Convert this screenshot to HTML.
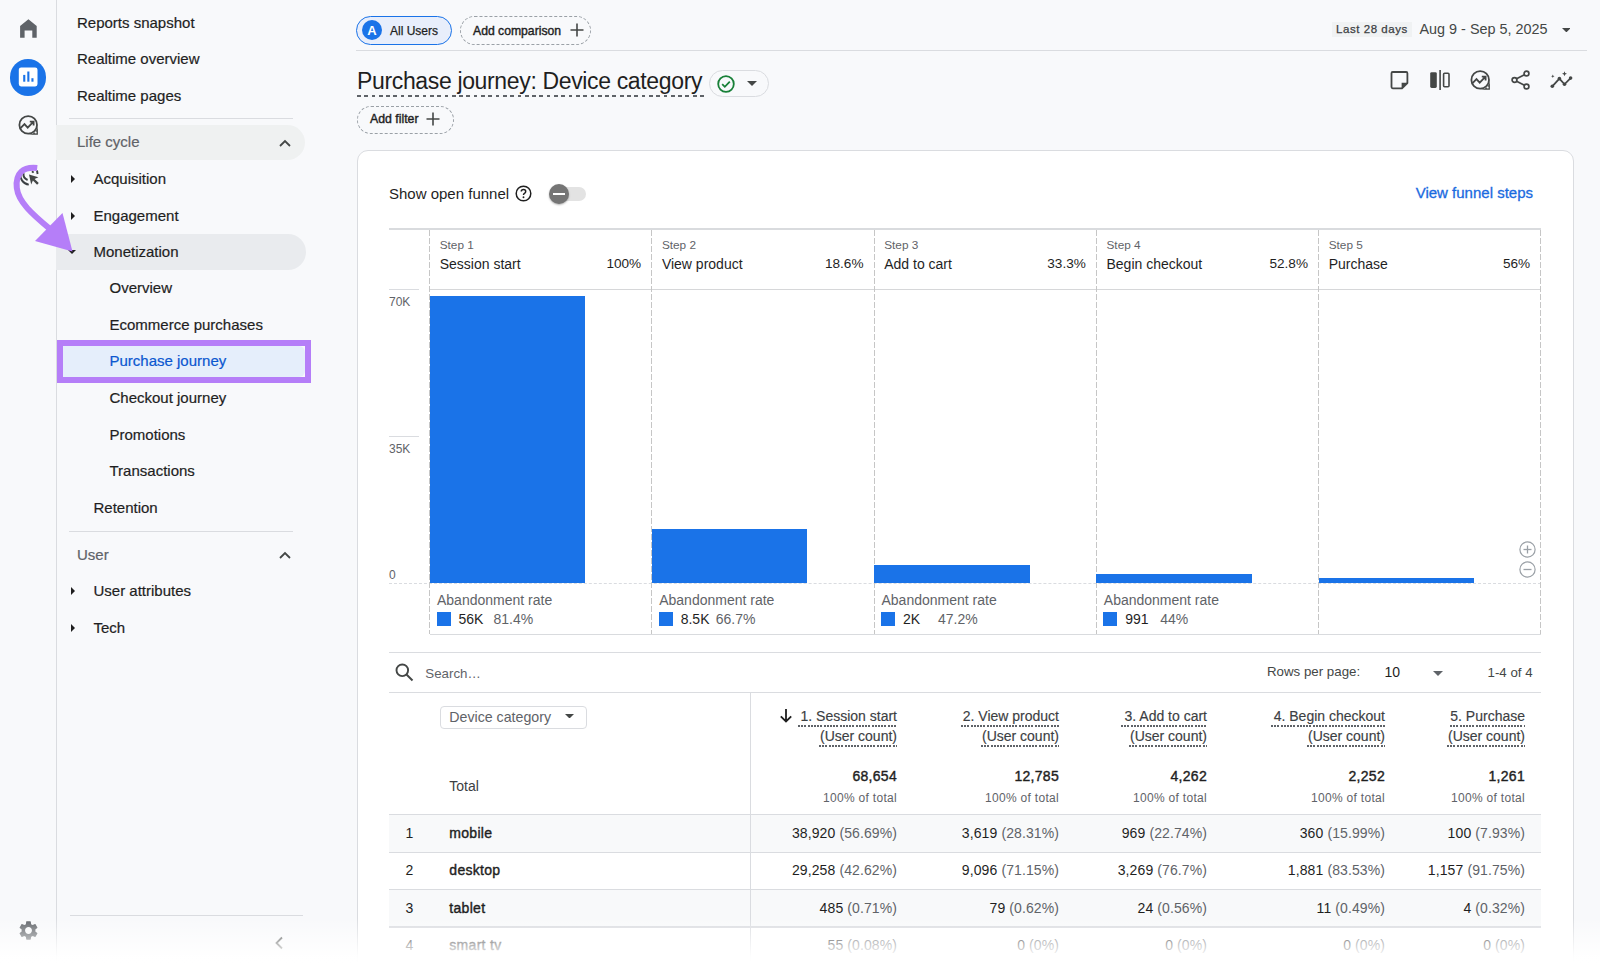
<!DOCTYPE html>
<html><head><meta charset="utf-8"><style>
html,body{margin:0;padding:0;width:1600px;height:963px;overflow:hidden;background:#f8f9fb;font-family:"Liberation Sans",sans-serif;}
div{white-space:nowrap;}
</style></head><body>
<div style="position:absolute;left:56px;top:0px;width:1px;height:963px;background:#dadce0;"></div>
<svg style="position:absolute;left:0;top:0" width="50" height="50" viewBox="0 0 50 50"><path d="M28.4 19.3 L36.7 26 V37.8 H32.3 V30.4 H24.6 V37.8 H20.1 V26 Z" fill="#5f6368"/></svg>
<div style="position:absolute;left:9.7px;top:59.3px;width:36.4px;height:36.4px;border-radius:50%;background:#1a73e8"></div>
<svg style="position:absolute;left:0;top:50px" width="50" height="50" viewBox="0 50 50 50"><rect x="18.8" y="67.5" width="18.7" height="18.9" rx="2.3" fill="#fff"/><rect x="23.2" y="74.9" width="2.1" height="6.8" fill="#1a73e8"/><rect x="27.3" y="71.5" width="2.1" height="10.2" fill="#1a73e8"/><rect x="31.4" y="78.2" width="2.1" height="3.5" fill="#1a73e8"/></svg>
<svg style="position:absolute;left:18px;top:115px" width="21" height="21" viewBox="0 0 21 21"><circle cx="10.2" cy="9.9" r="8.8" fill="none" stroke="#444746" stroke-width="1.8"/><path d="M19.9 9.9 V19.8 H10.2 A9.7 9.7 0 0 0 19.9 9.9 Z" fill="#444746"/><rect x="16.8" y="16.6" width="1.8" height="1.8" fill="#f8f9fb"/><path d="M2.3 13.4 L6.5 9.1 L9.7 12.6 L15 7.2 M11.8 6.6 H15.6 V10.4" fill="none" stroke="#444746" stroke-width="1.8"/></svg>
<svg style="position:absolute;left:0;top:150px" width="50" height="50" viewBox="0 150 50 50"><path d="M20.6 173 A9.6 9.6 0 0 0 28.8 184.6" fill="none" stroke="#3c4043" stroke-width="1.9"/><path d="M23.6 173.2 A6.2 6.2 0 0 0 27.6 180" fill="none" stroke="#3c4043" stroke-width="1.9"/><path d="M32 171.2 L33.6 172.6 M37 170.5 L37.6 174" stroke="#3c4043" stroke-width="1.9"/><path d="M29 174.6 L38.4 177.2 L34.6 178.9 L38.8 183.1 L37.1 184.8 L32.9 180.6 L31.2 184.4 Z" fill="#444746"/></svg>
<svg style="position:absolute;left:16.5px;top:919px" width="23" height="23" viewBox="0 0 24 24"><path fill="#5f6368" d="M19.14 12.94c.04-.3.06-.61.06-.94 0-.32-.02-.64-.07-.94l2.03-1.58a.49.49 0 0 0 .12-.61l-1.92-3.32a.488.488 0 0 0-.59-.22l-2.39.96c-.5-.38-1.03-.7-1.62-.94l-.36-2.54a.484.484 0 0 0-.48-.41h-3.84c-.24 0-.43.17-.47.41l-.36 2.54c-.59.24-1.13.57-1.62.94l-2.39-.96c-.22-.08-.47 0-.59.22L2.74 8.87c-.12.21-.08.47.12.61l2.03 1.58c-.05.3-.09.63-.09.94s.02.64.07.94l-2.03 1.58a.49.49 0 0 0-.12.61l1.92 3.32c.12.22.37.29.59.22l2.39-.96c.5.38 1.03.7 1.62.94l.36 2.54c.05.24.24.41.48.41h3.84c.24 0 .44-.17.47-.41l.36-2.54c.59-.24 1.13-.56 1.62-.94l2.39.96c.22.08.47 0 .59-.22l1.92-3.32c.12-.22.07-.47-.12-.61l-2.01-1.58zM12 15.6c-1.98 0-3.6-1.62-3.6-3.6s1.62-3.6 3.6-3.6 3.6 1.62 3.6 3.6-1.62 3.6-3.6 3.6z"/></svg>
<div style="position:absolute;left:77px;top:13.70px;font-size:15px;line-height:17px;color:#1f1f1f;-webkit-text-stroke:0.2px #1f1f1f;">Reports snapshot</div>
<div style="position:absolute;left:77px;top:50.30px;font-size:15px;line-height:17px;color:#1f1f1f;-webkit-text-stroke:0.2px #1f1f1f;">Realtime overview</div>
<div style="position:absolute;left:77px;top:86.80px;font-size:15px;line-height:17px;color:#1f1f1f;-webkit-text-stroke:0.2px #1f1f1f;">Realtime pages</div>
<div style="position:absolute;left:69px;top:118px;width:224px;height:1px;background:#dadce0;"></div>
<div style="position:absolute;left:56px;top:124.5px;width:249px;height:35.5px;background:#eff1f1;border-radius:0 18px 18px 0"></div>
<div style="position:absolute;left:77px;top:133.30px;font-size:15px;line-height:17px;color:#5f6368;-webkit-text-stroke:0.2px #5f6368;">Life cycle</div>
<svg style="position:absolute;left:278px;top:138px" width="14" height="10" viewBox="0 0 14 10"><path d="M2 8 L7 3 L12 8" fill="none" stroke="#444746" stroke-width="1.8"/></svg>
<svg style="position:absolute;left:69.5px;top:174px" width="6" height="10" viewBox="0 0 6 10"><path d="M1 1 L5 5 L1 9 Z" fill="#1f1f1f"/></svg>
<div style="position:absolute;left:93.5px;top:170.30px;font-size:15px;line-height:17px;color:#1f1f1f;-webkit-text-stroke:0.2px #1f1f1f;">Acquisition</div>
<svg style="position:absolute;left:69.5px;top:210.5px" width="6" height="10" viewBox="0 0 6 10"><path d="M1 1 L5 5 L1 9 Z" fill="#1f1f1f"/></svg>
<div style="position:absolute;left:93.5px;top:206.80px;font-size:15px;line-height:17px;color:#1f1f1f;-webkit-text-stroke:0.2px #1f1f1f;">Engagement</div>
<div style="position:absolute;left:56px;top:234px;width:250px;height:36px;background:#e9ebee;border-radius:0 18px 18px 0"></div>
<svg style="position:absolute;left:67px;top:249px" width="10" height="6" viewBox="0 0 10 6"><path d="M1 1 L5 5 L9 1 Z" fill="#1f1f1f"/></svg>
<div style="position:absolute;left:93.5px;top:243.30px;font-size:15px;line-height:17px;color:#1f1f1f;-webkit-text-stroke:0.2px #1f1f1f;">Monetization</div>
<div style="position:absolute;left:109.5px;top:279.30px;font-size:15px;line-height:17px;color:#1f1f1f;-webkit-text-stroke:0.2px #1f1f1f;">Overview</div>
<div style="position:absolute;left:109.5px;top:315.80px;font-size:15px;line-height:17px;color:#1f1f1f;-webkit-text-stroke:0.2px #1f1f1f;">Ecommerce purchases</div>
<div style="position:absolute;left:57px;top:340px;width:254px;height:43px;box-sizing:border-box;border:6px solid #b57ef8;"></div>
<div style="position:absolute;left:63px;top:346px;width:242px;height:31px;background:#e5eefb;border-radius:0 6px 6px 0"></div>
<div style="position:absolute;left:109.5px;top:352.30px;font-size:15px;line-height:17px;color:#0b57d0;-webkit-text-stroke:0.2px #0b57d0;">Purchase journey</div>
<div style="position:absolute;left:109.5px;top:389.30px;font-size:15px;line-height:17px;color:#1f1f1f;-webkit-text-stroke:0.2px #1f1f1f;">Checkout journey</div>
<div style="position:absolute;left:109.5px;top:425.80px;font-size:15px;line-height:17px;color:#1f1f1f;-webkit-text-stroke:0.2px #1f1f1f;">Promotions</div>
<div style="position:absolute;left:109.5px;top:462.30px;font-size:15px;line-height:17px;color:#1f1f1f;-webkit-text-stroke:0.2px #1f1f1f;">Transactions</div>
<div style="position:absolute;left:93.5px;top:498.80px;font-size:15px;line-height:17px;color:#1f1f1f;-webkit-text-stroke:0.2px #1f1f1f;">Retention</div>
<div style="position:absolute;left:69px;top:530.5px;width:224px;height:1px;background:#dadce0;"></div>
<div style="position:absolute;left:77px;top:545.80px;font-size:15px;line-height:17px;color:#5f6368;-webkit-text-stroke:0.2px #5f6368;">User</div>
<svg style="position:absolute;left:278px;top:550px" width="14" height="10" viewBox="0 0 14 10"><path d="M2 8 L7 3 L12 8" fill="none" stroke="#444746" stroke-width="1.8"/></svg>
<svg style="position:absolute;left:69.5px;top:586px" width="6" height="10" viewBox="0 0 6 10"><path d="M1 1 L5 5 L1 9 Z" fill="#1f1f1f"/></svg>
<div style="position:absolute;left:93.5px;top:582.30px;font-size:15px;line-height:17px;color:#1f1f1f;-webkit-text-stroke:0.2px #1f1f1f;">User attributes</div>
<svg style="position:absolute;left:69.5px;top:622.5px" width="6" height="10" viewBox="0 0 6 10"><path d="M1 1 L5 5 L1 9 Z" fill="#1f1f1f"/></svg>
<div style="position:absolute;left:93.5px;top:618.80px;font-size:15px;line-height:17px;color:#1f1f1f;-webkit-text-stroke:0.2px #1f1f1f;">Tech</div>
<div style="position:absolute;left:70px;top:915px;width:233px;height:1px;background:#dadce0;"></div>
<svg style="position:absolute;left:274px;top:936px" width="10" height="14" viewBox="0 0 10 14"><path d="M8 1.5 L2.5 7 L8 12.5" fill="none" stroke="#444746" stroke-width="1.8"/></svg>
<svg style="position:absolute;left:0;top:150px" width="100" height="120" viewBox="0 150 100 120"><path d="M37.2 168 C 23 166.5, 15.2 173, 16.8 188 C 18.5 202, 32 214, 50 229" fill="none" stroke="#b57ef8" stroke-width="6" stroke-linecap="butt"/><path d="M62.5 213 L35 241 L72.5 251.5 Z" fill="#b57ef8"/></svg>
<div style="position:absolute;left:356px;top:16px;width:96px;height:28.5px;box-sizing:border-box;border:1.5px solid #1a73e8;border-radius:15px;background:#e8eefb"></div>
<div style="position:absolute;left:362px;top:20px;width:20px;height:20px;border-radius:50%;background:#1a73e8"></div>
<div style="position:absolute;left:372px;transform:translateX(-50%);top:23.00px;font-size:13px;line-height:15px;color:#fff;font-weight:700;">A</div>
<div style="position:absolute;left:390px;top:23.54px;font-size:12px;line-height:14px;color:#1f1f1f;-webkit-text-stroke:0.25px #1f1f1f;">All Users</div>
<div style="position:absolute;left:460px;top:16px;width:131px;height:28.5px;box-sizing:border-box;border:1px dashed #9aa0a6;border-radius:15px"></div>
<div style="position:absolute;left:473px;top:23.97px;font-size:12.2px;line-height:14px;color:#1f1f1f;-webkit-text-stroke:0.4px #1f1f1f;">Add comparison</div>
<svg style="position:absolute;left:569.5px;top:23.0px" width="14" height="14" viewBox="0 0 14 14"><path d="M7 0.5 V13.5 M0.5 7 H13.5" stroke="#444746" stroke-width="1.6" fill="none"/></svg>
<div style="position:absolute;left:356px;top:50px;width:1231px;height:1px;background:#dadce0;"></div>
<div style="position:absolute;left:1332px;top:22px;width:80px;height:15px;background:#f0f2f3"></div>
<div style="position:absolute;left:1336px;top:23.02px;font-size:11.5px;line-height:13px;color:#3c4043;letter-spacing:0.55px;-webkit-text-stroke:0.25px #3c4043;">Last 28 days</div>
<div style="position:absolute;left:1419.5px;top:20.81px;font-size:14.4px;line-height:17px;color:#444746;">Aug 9 - Sep 5, 2025</div>
<svg style="position:absolute;left:1561.6px;top:27.8px" width="8.8" height="4.4" viewBox="0 0 10 5"><path d="M0 0 L10 0 L5 5 Z" fill="#444746"/></svg>
<div style="position:absolute;left:357px;top:68.33px;font-size:23px;line-height:26px;color:#1f1f1f;letter-spacing:-0.35px;">Purchase journey: Device category</div>
<div style="position:absolute;left:357px;top:95px;width:347px;height:2px;background:repeating-linear-gradient(90deg,#5f6368 0 3.7px,transparent 3.7px 7.3px)"></div>
<div style="position:absolute;left:709px;top:69.5px;width:60px;height:27.5px;box-sizing:border-box;border:1px solid #dadce0;border-radius:14px"></div>
<svg style="position:absolute;left:717px;top:75px" width="18" height="18" viewBox="0 0 18 18"><circle cx="9" cy="9" r="7.8" fill="none" stroke="#188038" stroke-width="1.8"/><path d="M5.2 9.2 L7.8 11.8 L12.8 6.6" fill="none" stroke="#188038" stroke-width="1.8"/></svg>
<svg style="position:absolute;left:747px;top:80.5px" width="10" height="5" viewBox="0 0 10 5"><path d="M0 0 L10 0 L5 5 Z" fill="#444746"/></svg>
<div style="position:absolute;left:357px;top:106px;width:97px;height:27.5px;box-sizing:border-box;border:1px dashed #9aa0a6;border-radius:14px"></div>
<div style="position:absolute;left:370px;top:112.24px;font-size:12.3px;line-height:14px;color:#1f1f1f;-webkit-text-stroke:0.4px #1f1f1f;">Add filter</div>
<svg style="position:absolute;left:426.3px;top:111.6px" width="14" height="14" viewBox="0 0 14 14"><path d="M7 0.5 V13.5 M0.5 7 H13.5" stroke="#444746" stroke-width="1.6" fill="none"/></svg>
<svg style="position:absolute;left:1389px;top:70px" width="20" height="20" viewBox="0 0 20 20"><path d="M2.5 3.2 Q2.5 2 3.7 2 H17.2 Q18.4 2 18.4 3.2 V13 L13 18.3 H3.7 Q2.5 18.3 2.5 17.1 Z" fill="none" stroke="#444746" stroke-width="1.8" stroke-linejoin="round"/><path d="M12.6 18.3 V12.8 H18.4 Z" fill="#444746"/></svg>
<svg style="position:absolute;left:1430px;top:70px" width="21" height="21" viewBox="0 0 21 21"><rect x="0.2" y="2.2" width="6.6" height="15.8" rx="1.4" fill="#444746"/><rect x="9.3" y="0" width="1.6" height="20" fill="#444746"/><rect x="13.6" y="3.3" width="5.4" height="13.5" rx="1" fill="none" stroke="#444746" stroke-width="1.6"/></svg>
<svg style="position:absolute;left:1470px;top:70px" width="21" height="21" viewBox="0 0 21 21"><circle cx="10.2" cy="9.9" r="8.8" fill="none" stroke="#444746" stroke-width="1.8"/><path d="M19.9 9.9 V19.8 H10.2 A9.7 9.7 0 0 0 19.9 9.9 Z" fill="#444746"/><rect x="16.8" y="16.6" width="1.8" height="1.8" fill="#f8f9fb"/><path d="M2.3 13.4 L6.5 9.1 L9.7 12.6 L15 7.2 M11.8 6.6 H15.6 V10.4" fill="none" stroke="#444746" stroke-width="1.8"/></svg>
<svg style="position:absolute;left:1511px;top:70px" width="21" height="21" viewBox="0 0 21 21"><circle cx="15.5" cy="3.5" r="2.4" fill="none" stroke="#444746" stroke-width="1.7"/><circle cx="3.5" cy="10" r="2.4" fill="none" stroke="#444746" stroke-width="1.7"/><circle cx="15.5" cy="16.5" r="2.4" fill="none" stroke="#444746" stroke-width="1.7"/><path d="M5.6 8.8 L13.4 4.7 M5.6 11.2 L13.4 15.3" stroke="#444746" stroke-width="1.7"/></svg>
<svg style="position:absolute;left:1546px;top:66px" width="30" height="28" viewBox="1546 66 30 28"><path d="M1552.3 86.3 L1559.4 78.6 L1564.5 84.3 L1570.6 78.1" fill="none" stroke="#444746" stroke-width="1.8"/><circle cx="1552.3" cy="86.3" r="1.8" fill="#444746"/><circle cx="1559.4" cy="78.6" r="1.8" fill="#444746"/><circle cx="1564.5" cy="84.3" r="1.8" fill="#444746"/><circle cx="1570.6" cy="78.1" r="1.8" fill="#444746"/><path d="M1564.5 71.3 L1565.2 73.1 L1567 73.8 L1565.2 74.5 L1564.5 76.3 L1563.8 74.5 L1562 73.8 L1563.8 73.1 Z" fill="#444746"/><path d="M1552.8 74.6 L1553.3 75.8 L1554.5 76.3 L1553.3 76.8 L1552.8 78 L1552.3 76.8 L1551.1 76.3 L1552.3 75.8 Z" fill="#444746"/></svg>
<div style="position:absolute;left:356.5px;top:150px;width:1217px;height:900px;box-sizing:border-box;border:1px solid #dadce0;border-radius:11px;background:#fff"></div>
<div style="position:absolute;left:389px;top:185.30px;font-size:15px;line-height:17px;color:#1f1f1f;">Show open funnel</div>
<svg style="position:absolute;left:515px;top:185px" width="17" height="17" viewBox="0 0 17 17"><circle cx="8.5" cy="8.5" r="7.3" fill="none" stroke="#1f1f1f" stroke-width="1.5"/><path d="M6.3 6.6 Q6.3 4.5 8.5 4.5 Q10.7 4.5 10.7 6.4 Q10.7 7.6 9.4 8.3 Q8.5 8.8 8.5 10" fill="none" stroke="#1f1f1f" stroke-width="1.5"/><circle cx="8.5" cy="12.3" r="0.95" fill="#1f1f1f"/></svg>
<div style="position:absolute;left:552px;top:187px;width:34px;height:14px;border-radius:7px;background:#e3e3e3"></div>
<div style="position:absolute;left:549px;top:184px;width:20px;height:20px;border-radius:50%;background:#757575;box-shadow:0 1px 2px rgba(0,0,0,.3)"></div>
<div style="position:absolute;left:553px;top:193px;width:12px;height:2px;background:#fff;"></div>
<div style="position:absolute;right:67px;top:183.90px;font-size:15px;line-height:17px;color:#1a6ae0;-webkit-text-stroke:0.3px #1a6ae0;">View funnel steps</div>
<div style="position:absolute;left:389px;top:228px;width:1152px;height:1.5px;background:#d9dbde;"></div>
<div style="position:absolute;left:429.5px;top:288.8px;width:1111px;height:1.5px;background:#d6d7d9;"></div>
<div style="position:absolute;left:389px;top:289px;width:30px;height:1.3px;background:#dadce0;"></div>
<div style="position:absolute;left:389px;top:436px;width:30px;height:1px;background:#dadce0;"></div>
<div style="position:absolute;left:389px;top:582.5px;width:1152px;height:0;border-top:1px dashed #dadce0"></div>
<div style="position:absolute;left:429.5px;top:634px;width:1111px;height:1.3px;background:#d9dbde;"></div>
<div style="position:absolute;left:429px;top:229px;width:1px;height:405px;background:repeating-linear-gradient(180deg,transparent 0 1px,#c6c6c6 1px 7px,transparent 7px 8px)"></div>
<div style="position:absolute;left:651px;top:229px;width:1px;height:405px;background:repeating-linear-gradient(180deg,transparent 0 1px,#c6c6c6 1px 7px,transparent 7px 8px)"></div>
<div style="position:absolute;left:874px;top:229px;width:1px;height:405px;background:repeating-linear-gradient(180deg,transparent 0 1px,#c6c6c6 1px 7px,transparent 7px 8px)"></div>
<div style="position:absolute;left:1096px;top:229px;width:1px;height:405px;background:repeating-linear-gradient(180deg,transparent 0 1px,#c6c6c6 1px 7px,transparent 7px 8px)"></div>
<div style="position:absolute;left:1318px;top:229px;width:1px;height:405px;background:repeating-linear-gradient(180deg,transparent 0 1px,#c6c6c6 1px 7px,transparent 7px 8px)"></div>
<div style="position:absolute;left:1540px;top:229px;width:1px;height:405px;background:repeating-linear-gradient(180deg,transparent 0 1px,#c6c6c6 1px 7px,transparent 7px 8px)"></div>
<div style="position:absolute;left:389px;top:294.84px;font-size:12px;line-height:14px;color:#5f6368;">70K</div>
<div style="position:absolute;left:389px;top:441.64px;font-size:12px;line-height:14px;color:#5f6368;">35K</div>
<div style="position:absolute;left:389px;top:568.24px;font-size:12px;line-height:14px;color:#5f6368;">0</div>
<div style="position:absolute;left:439.7px;top:237.91px;font-size:11.8px;line-height:14px;color:#5f6368;">Step 1</div>
<div style="position:absolute;left:439.7px;top:256.15px;font-size:14px;line-height:16px;color:#1f1f1f;">Session start</div>
<div style="position:absolute;right:958.8px;top:256.29px;font-size:13.6px;line-height:16px;color:#1f1f1f;">100%</div>
<div style="position:absolute;left:429.5px;top:295.63397142857144px;width:155.5px;height:287.36602857142856px;background:#1a73e8;"></div>
<div style="position:absolute;left:437.0px;top:591.95px;font-size:14px;line-height:16px;color:#5f6368;">Abandonment rate</div>
<div style="position:absolute;left:436.5px;top:612px;width:14px;height:14px;background:#1a73e8;"></div>
<div style="position:absolute;left:458.5px;top:611.15px;font-size:14px;line-height:16px;color:#1f1f1f;">56K</div>
<div style="position:absolute;left:493.5px;top:611.15px;font-size:14px;line-height:16px;color:#5f6368;">81.4%</div>
<div style="position:absolute;left:661.9000000000001px;top:237.91px;font-size:11.8px;line-height:14px;color:#5f6368;">Step 2</div>
<div style="position:absolute;left:661.9000000000001px;top:256.15px;font-size:14px;line-height:16px;color:#1f1f1f;">View product</div>
<div style="position:absolute;right:736.5px;top:256.29px;font-size:13.6px;line-height:16px;color:#1f1f1f;">18.6%</div>
<div style="position:absolute;left:651.7px;top:529.4856428571428px;width:155.5px;height:53.51435714285714px;background:#1a73e8;"></div>
<div style="position:absolute;left:659.2px;top:591.95px;font-size:14px;line-height:16px;color:#5f6368;">Abandonment rate</div>
<div style="position:absolute;left:658.7px;top:612px;width:14px;height:14px;background:#1a73e8;"></div>
<div style="position:absolute;left:680.7px;top:611.15px;font-size:14px;line-height:16px;color:#1f1f1f;">8.5K</div>
<div style="position:absolute;left:715.7px;top:611.15px;font-size:14px;line-height:16px;color:#5f6368;">66.7%</div>
<div style="position:absolute;left:884.2px;top:237.91px;font-size:11.8px;line-height:14px;color:#5f6368;">Step 3</div>
<div style="position:absolute;left:884.2px;top:256.15px;font-size:14px;line-height:16px;color:#1f1f1f;">Add to cart</div>
<div style="position:absolute;right:514.2px;top:256.29px;font-size:13.6px;line-height:16px;color:#1f1f1f;">33.3%</div>
<div style="position:absolute;left:874px;top:565.1604857142858px;width:155.5px;height:17.839514285714287px;background:#1a73e8;"></div>
<div style="position:absolute;left:881.5px;top:591.95px;font-size:14px;line-height:16px;color:#5f6368;">Abandonment rate</div>
<div style="position:absolute;left:881px;top:612px;width:14px;height:14px;background:#1a73e8;"></div>
<div style="position:absolute;left:903px;top:611.15px;font-size:14px;line-height:16px;color:#1f1f1f;">2K</div>
<div style="position:absolute;left:938px;top:611.15px;font-size:14px;line-height:16px;color:#5f6368;">47.2%</div>
<div style="position:absolute;left:1106.5px;top:237.91px;font-size:11.8px;line-height:14px;color:#5f6368;">Step 4</div>
<div style="position:absolute;left:1106.5px;top:256.15px;font-size:14px;line-height:16px;color:#1f1f1f;">Begin checkout</div>
<div style="position:absolute;right:292.0px;top:256.29px;font-size:13.6px;line-height:16px;color:#1f1f1f;">52.8%</div>
<div style="position:absolute;left:1096.3px;top:573.5737714285714px;width:155.5px;height:9.426228571428572px;background:#1a73e8;"></div>
<div style="position:absolute;left:1103.8px;top:591.95px;font-size:14px;line-height:16px;color:#5f6368;">Abandonment rate</div>
<div style="position:absolute;left:1103.3px;top:612px;width:14px;height:14px;background:#1a73e8;"></div>
<div style="position:absolute;left:1125.3px;top:611.15px;font-size:14px;line-height:16px;color:#1f1f1f;">991</div>
<div style="position:absolute;left:1160.3px;top:611.15px;font-size:14px;line-height:16px;color:#5f6368;">44%</div>
<div style="position:absolute;left:1328.7px;top:237.91px;font-size:11.8px;line-height:14px;color:#5f6368;">Step 5</div>
<div style="position:absolute;left:1328.7px;top:256.15px;font-size:14px;line-height:16px;color:#1f1f1f;">Purchase</div>
<div style="position:absolute;right:69.79999999999995px;top:256.29px;font-size:13.6px;line-height:16px;color:#1f1f1f;">56%</div>
<div style="position:absolute;left:1318.5px;top:577.7218142857142px;width:155.5px;height:5.278185714285715px;background:#1a73e8;"></div>
<svg style="position:absolute;left:1518.5px;top:540.5px" width="17" height="17" viewBox="0 0 17 17"><circle cx="8.5" cy="8.5" r="7.6" fill="none" stroke="#9aa0a6" stroke-width="1.2"/><path d="M4.5 8.5 H12.5" stroke="#9aa0a6" stroke-width="1.3"/><path d="M8.5 4.5 V12.5" stroke="#9aa0a6" stroke-width="1.3"/></svg>
<svg style="position:absolute;left:1518.5px;top:560.5px" width="17" height="17" viewBox="0 0 17 17"><circle cx="8.5" cy="8.5" r="7.6" fill="none" stroke="#9aa0a6" stroke-width="1.2"/><path d="M4.5 8.5 H12.5" stroke="#9aa0a6" stroke-width="1.3"/></svg>
<div style="position:absolute;left:389px;top:651.5px;width:1152px;height:1.5px;background:#dadce0;"></div>
<svg style="position:absolute;left:395px;top:663px" width="19" height="19" viewBox="0 0 19 19"><circle cx="7.3" cy="7.3" r="5.8" fill="none" stroke="#444746" stroke-width="1.9"/><path d="M11.5 11.5 L17.5 17.5" stroke="#444746" stroke-width="2"/></svg>
<div style="position:absolute;left:425.3px;top:665.69px;font-size:13.3px;line-height:15px;color:#5f6368;">Search…</div>
<div style="position:absolute;left:1267px;top:664.49px;font-size:13.3px;line-height:15px;color:#444746;">Rows per page:</div>
<div style="position:absolute;left:1384.5px;top:664.15px;font-size:14px;line-height:16px;color:#1f1f1f;">10</div>
<svg style="position:absolute;left:1433px;top:670.5px" width="10" height="5" viewBox="0 0 10 5"><path d="M0 0 L10 0 L5 5 Z" fill="#5f6368"/></svg>
<div style="position:absolute;right:67.40000000000009px;top:664.89px;font-size:13.3px;line-height:15px;color:#444746;">1-4 of 4</div>
<div style="position:absolute;left:389px;top:691.5px;width:1152px;height:1.3px;background:#dadce0;"></div>
<div style="position:absolute;left:750px;top:692px;width:1px;height:300px;background:#dadce0;"></div>
<div style="position:absolute;left:440px;top:705.5px;width:147px;height:23.5px;box-sizing:border-box;border:1px solid #dadce0;border-radius:4px"></div>
<div style="position:absolute;left:449.3px;top:709.08px;font-size:14.2px;line-height:16px;color:#5f6368;">Device category</div>
<svg style="position:absolute;left:565.0px;top:713.75px" width="9.0" height="4.5" viewBox="0 0 10 5"><path d="M0 0 L10 0 L5 5 Z" fill="#444746"/></svg>
<svg style="position:absolute;left:779px;top:708px" width="14" height="15" viewBox="0 0 14 15"><path d="M7 1 V13.5 M1.8 8.3 L7 13.5 L12.2 8.3" fill="none" stroke="#1f1f1f" stroke-width="1.8"/></svg>
<div style="position:absolute;right:703px;top:707.65px;font-size:14px;line-height:16px;color:#3c4043;-webkit-text-stroke:0.15px #3c4043;">1. Session start</div>
<div style="position:absolute;right:703px;top:727.95px;font-size:14px;line-height:16px;color:#3c4043;-webkit-text-stroke:0.15px #3c4043;">(User count)</div>
<div style="position:absolute;left:798px;top:725px;width:99px;height:1.5px;background:repeating-linear-gradient(90deg,#5f6368 0 2px,transparent 2px 3.2px);"></div>
<div style="position:absolute;left:818.5px;top:745px;width:78.5px;height:1.5px;background:repeating-linear-gradient(90deg,#5f6368 0 2px,transparent 2px 3.2px);"></div>
<div style="position:absolute;right:703px;top:768.15px;font-size:14px;line-height:16px;color:#1f1f1f;letter-spacing:0.3px;-webkit-text-stroke:0.4px #1f1f1f;">68,654</div>
<div style="position:absolute;right:703px;top:791.14px;font-size:12px;line-height:14px;color:#5f6368;letter-spacing:0.3px;">100% of total</div>
<div style="position:absolute;right:541px;top:707.65px;font-size:14px;line-height:16px;color:#3c4043;-webkit-text-stroke:0.15px #3c4043;">2. View product</div>
<div style="position:absolute;right:541px;top:727.95px;font-size:14px;line-height:16px;color:#3c4043;-webkit-text-stroke:0.15px #3c4043;">(User count)</div>
<div style="position:absolute;left:961px;top:725px;width:98px;height:1.5px;background:repeating-linear-gradient(90deg,#5f6368 0 2px,transparent 2px 3.2px);"></div>
<div style="position:absolute;left:980.5px;top:745px;width:78.5px;height:1.5px;background:repeating-linear-gradient(90deg,#5f6368 0 2px,transparent 2px 3.2px);"></div>
<div style="position:absolute;right:541px;top:768.15px;font-size:14px;line-height:16px;color:#1f1f1f;letter-spacing:0.3px;-webkit-text-stroke:0.4px #1f1f1f;">12,785</div>
<div style="position:absolute;right:541px;top:791.14px;font-size:12px;line-height:14px;color:#5f6368;letter-spacing:0.3px;">100% of total</div>
<div style="position:absolute;right:393px;top:707.65px;font-size:14px;line-height:16px;color:#3c4043;-webkit-text-stroke:0.15px #3c4043;">3. Add to cart</div>
<div style="position:absolute;right:393px;top:727.95px;font-size:14px;line-height:16px;color:#3c4043;-webkit-text-stroke:0.15px #3c4043;">(User count)</div>
<div style="position:absolute;left:1121px;top:725px;width:86px;height:1.5px;background:repeating-linear-gradient(90deg,#5f6368 0 2px,transparent 2px 3.2px);"></div>
<div style="position:absolute;left:1128.5px;top:745px;width:78.5px;height:1.5px;background:repeating-linear-gradient(90deg,#5f6368 0 2px,transparent 2px 3.2px);"></div>
<div style="position:absolute;right:393px;top:768.15px;font-size:14px;line-height:16px;color:#1f1f1f;letter-spacing:0.3px;-webkit-text-stroke:0.4px #1f1f1f;">4,262</div>
<div style="position:absolute;right:393px;top:791.14px;font-size:12px;line-height:14px;color:#5f6368;letter-spacing:0.3px;">100% of total</div>
<div style="position:absolute;right:215px;top:707.65px;font-size:14px;line-height:16px;color:#3c4043;-webkit-text-stroke:0.15px #3c4043;">4. Begin checkout</div>
<div style="position:absolute;right:215px;top:727.95px;font-size:14px;line-height:16px;color:#3c4043;-webkit-text-stroke:0.15px #3c4043;">(User count)</div>
<div style="position:absolute;left:1271px;top:725px;width:114px;height:1.5px;background:repeating-linear-gradient(90deg,#5f6368 0 2px,transparent 2px 3.2px);"></div>
<div style="position:absolute;left:1306.5px;top:745px;width:78.5px;height:1.5px;background:repeating-linear-gradient(90deg,#5f6368 0 2px,transparent 2px 3.2px);"></div>
<div style="position:absolute;right:215px;top:768.15px;font-size:14px;line-height:16px;color:#1f1f1f;letter-spacing:0.3px;-webkit-text-stroke:0.4px #1f1f1f;">2,252</div>
<div style="position:absolute;right:215px;top:791.14px;font-size:12px;line-height:14px;color:#5f6368;letter-spacing:0.3px;">100% of total</div>
<div style="position:absolute;right:75px;top:707.65px;font-size:14px;line-height:16px;color:#3c4043;-webkit-text-stroke:0.15px #3c4043;">5. Purchase</div>
<div style="position:absolute;right:75px;top:727.95px;font-size:14px;line-height:16px;color:#3c4043;-webkit-text-stroke:0.15px #3c4043;">(User count)</div>
<div style="position:absolute;left:1450px;top:725px;width:75px;height:1.5px;background:repeating-linear-gradient(90deg,#5f6368 0 2px,transparent 2px 3.2px);"></div>
<div style="position:absolute;left:1446.5px;top:745px;width:78.5px;height:1.5px;background:repeating-linear-gradient(90deg,#5f6368 0 2px,transparent 2px 3.2px);"></div>
<div style="position:absolute;right:75px;top:768.15px;font-size:14px;line-height:16px;color:#1f1f1f;letter-spacing:0.3px;-webkit-text-stroke:0.4px #1f1f1f;">1,261</div>
<div style="position:absolute;right:75px;top:791.14px;font-size:12px;line-height:14px;color:#5f6368;letter-spacing:0.3px;">100% of total</div>
<div style="position:absolute;left:449.3px;top:777.95px;font-size:14px;line-height:16px;color:#3c4043;">Total</div>
<div style="position:absolute;left:389px;top:814.2px;width:1152px;height:37.5px;background:#f8f9fa;"></div>
<div style="position:absolute;left:389px;top:814.2px;width:1152px;height:1.3px;background:#dadce0;"></div>
<div style="position:absolute;left:750px;top:814.2px;width:1px;height:37.5px;background:#dadce0;"></div>
<div style="position:absolute;left:405.5px;top:824.85px;font-size:14px;line-height:16px;color:#1f1f1f;">1</div>
<div style="position:absolute;left:449.3px;top:824.85px;font-size:14px;line-height:16px;color:#1f1f1f;letter-spacing:0.3px;-webkit-text-stroke:0.4px #1f1f1f;">mobile</div>

<div style="position:absolute;right:703px;top:824.85px;font-size:14px;line-height:16px;color:#1f1f1f;letter-spacing:0.1px;">38,920 <span style="color:#5f6368">(56.69%)</span></div>

<div style="position:absolute;right:541px;top:824.85px;font-size:14px;line-height:16px;color:#1f1f1f;letter-spacing:0.1px;">3,619 <span style="color:#5f6368">(28.31%)</span></div>

<div style="position:absolute;right:393px;top:824.85px;font-size:14px;line-height:16px;color:#1f1f1f;letter-spacing:0.1px;">969 <span style="color:#5f6368">(22.74%)</span></div>

<div style="position:absolute;right:215px;top:824.85px;font-size:14px;line-height:16px;color:#1f1f1f;letter-spacing:0.1px;">360 <span style="color:#5f6368">(15.99%)</span></div>

<div style="position:absolute;right:75px;top:824.85px;font-size:14px;line-height:16px;color:#1f1f1f;letter-spacing:0.1px;">100 <span style="color:#5f6368">(7.93%)</span></div>
<div style="position:absolute;left:389px;top:851.6px;width:1152px;height:1.3px;background:#dadce0;"></div>
<div style="position:absolute;left:750px;top:851.6px;width:1px;height:37.5px;background:#dadce0;"></div>
<div style="position:absolute;left:405.5px;top:862.25px;font-size:14px;line-height:16px;color:#1f1f1f;">2</div>
<div style="position:absolute;left:449.3px;top:862.25px;font-size:14px;line-height:16px;color:#1f1f1f;letter-spacing:0.3px;-webkit-text-stroke:0.4px #1f1f1f;">desktop</div>

<div style="position:absolute;right:703px;top:862.25px;font-size:14px;line-height:16px;color:#1f1f1f;letter-spacing:0.1px;">29,258 <span style="color:#5f6368">(42.62%)</span></div>

<div style="position:absolute;right:541px;top:862.25px;font-size:14px;line-height:16px;color:#1f1f1f;letter-spacing:0.1px;">9,096 <span style="color:#5f6368">(71.15%)</span></div>

<div style="position:absolute;right:393px;top:862.25px;font-size:14px;line-height:16px;color:#1f1f1f;letter-spacing:0.1px;">3,269 <span style="color:#5f6368">(76.7%)</span></div>

<div style="position:absolute;right:215px;top:862.25px;font-size:14px;line-height:16px;color:#1f1f1f;letter-spacing:0.1px;">1,881 <span style="color:#5f6368">(83.53%)</span></div>

<div style="position:absolute;right:75px;top:862.25px;font-size:14px;line-height:16px;color:#1f1f1f;letter-spacing:0.1px;">1,157 <span style="color:#5f6368">(91.75%)</span></div>
<div style="position:absolute;left:389px;top:889px;width:1152px;height:37.5px;background:#f8f9fa;"></div>
<div style="position:absolute;left:389px;top:889px;width:1152px;height:1.3px;background:#dadce0;"></div>
<div style="position:absolute;left:750px;top:889px;width:1px;height:37.5px;background:#dadce0;"></div>
<div style="position:absolute;left:405.5px;top:899.65px;font-size:14px;line-height:16px;color:#1f1f1f;">3</div>
<div style="position:absolute;left:449.3px;top:899.65px;font-size:14px;line-height:16px;color:#1f1f1f;letter-spacing:0.3px;-webkit-text-stroke:0.4px #1f1f1f;">tablet</div>

<div style="position:absolute;right:703px;top:899.65px;font-size:14px;line-height:16px;color:#1f1f1f;letter-spacing:0.1px;">485 <span style="color:#5f6368">(0.71%)</span></div>

<div style="position:absolute;right:541px;top:899.65px;font-size:14px;line-height:16px;color:#1f1f1f;letter-spacing:0.1px;">79 <span style="color:#5f6368">(0.62%)</span></div>

<div style="position:absolute;right:393px;top:899.65px;font-size:14px;line-height:16px;color:#1f1f1f;letter-spacing:0.1px;">24 <span style="color:#5f6368">(0.56%)</span></div>

<div style="position:absolute;right:215px;top:899.65px;font-size:14px;line-height:16px;color:#1f1f1f;letter-spacing:0.1px;">11 <span style="color:#5f6368">(0.49%)</span></div>

<div style="position:absolute;right:75px;top:899.65px;font-size:14px;line-height:16px;color:#1f1f1f;letter-spacing:0.1px;">4 <span style="color:#5f6368">(0.32%)</span></div>
<div style="position:absolute;left:389px;top:926.4px;width:1152px;height:1.3px;background:#dadce0;"></div>
<div style="position:absolute;left:750px;top:926.4px;width:1px;height:37.5px;background:#dadce0;"></div>
<div style="position:absolute;left:405.5px;top:937.05px;font-size:14px;line-height:16px;color:#1f1f1f;">4</div>
<div style="position:absolute;left:449.3px;top:937.05px;font-size:14px;line-height:16px;color:#1f1f1f;letter-spacing:0.3px;-webkit-text-stroke:0.4px #1f1f1f;">smart tv</div>

<div style="position:absolute;right:703px;top:937.05px;font-size:14px;line-height:16px;color:#1f1f1f;letter-spacing:0.1px;">55 <span style="color:#5f6368">(0.08%)</span></div>

<div style="position:absolute;right:541px;top:937.05px;font-size:14px;line-height:16px;color:#1f1f1f;letter-spacing:0.1px;">0 <span style="color:#5f6368">(0%)</span></div>

<div style="position:absolute;right:393px;top:937.05px;font-size:14px;line-height:16px;color:#1f1f1f;letter-spacing:0.1px;">0 <span style="color:#5f6368">(0%)</span></div>

<div style="position:absolute;right:215px;top:937.05px;font-size:14px;line-height:16px;color:#1f1f1f;letter-spacing:0.1px;">0 <span style="color:#5f6368">(0%)</span></div>

<div style="position:absolute;right:75px;top:937.05px;font-size:14px;line-height:16px;color:#1f1f1f;letter-spacing:0.1px;">0 <span style="color:#5f6368">(0%)</span></div>
<div style="position:absolute;left:0;top:918px;width:1600px;height:45px;background:linear-gradient(rgba(255,255,255,0),rgba(255,255,255,0.95) 85%,#fff)"></div>
</body></html>
